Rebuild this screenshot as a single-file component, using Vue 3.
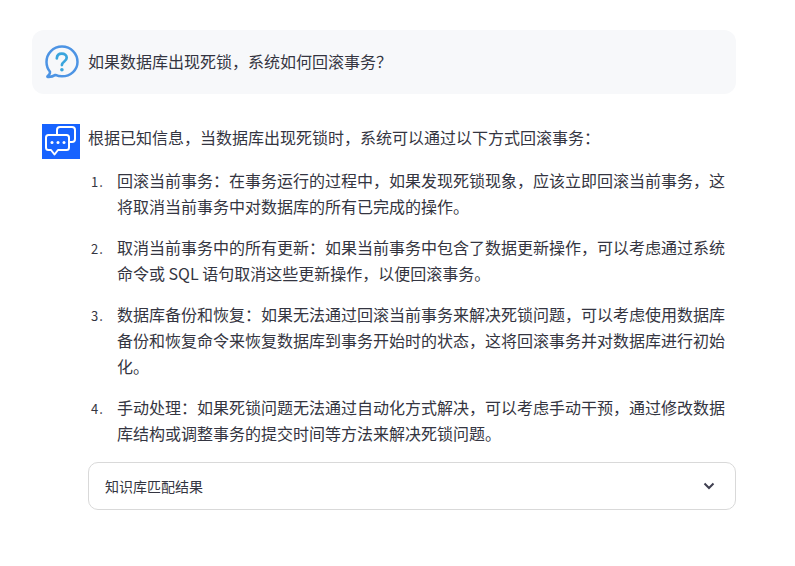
<script setup>
const items = [
  '回滚当前事务：在事务运行的过程中，如果发现死锁现象，应该立即回滚当前事务，这将取消当前事务中对数据库的所有已完成的操作。',
  '取消当前事务中的所有更新：如果当前事务中包含了数据更新操作，可以考虑通过系统命令或 SQL 语句取消这些更新操作，以便回滚事务。',
  '数据库备份和恢复：如果无法通过回滚当前事务来解决死锁问题，可以考虑使用数据库备份和恢复命令来恢复数据库到事务开始时的状态，这将回滚事务并对数据库进行初始化。',
  '手动处理：如果死锁问题无法通过自动化方式解决，可以考虑手动干预，通过修改数据库结构或调整事务的提交时间等方法来解决死锁问题。'
]
</script>

<template>
  <div class="page">
    <div class="question">
      <svg class="q-icon" width="38" height="38" viewBox="0 0 38 38" fill="none">
        <path d="M20 3.500C11.200 3.500 4.500 10.400 4.500 19c0 3.700 1.300 7.100 3.500 9.800.1 1.800-.8 3.300-2.400 4.200-.5.3-.3.9.3.9 2.800.2 5.400-.6 7.500-2 2 .9 4.300 1.400 6.600 1.400 8.800 0 15.500-6.600 15.500-14.300C35.500 10.400 28.800 3.500 20 3.500z" stroke="#4d94e4" stroke-width="2.500" stroke-linejoin="round"/>
        <path d="M14.800 15.300c.2-2.900 2.200-4.600 5-4.600 2.800 0 4.900 1.700 4.900 4.100 0 3.600-4.800 3.700-4.800 7.300" stroke="#3aa5dd" stroke-width="2.700" stroke-linecap="round"/>
        <circle cx="19.900" cy="26.800" r="1.800" fill="#3aa5dd"/>
      </svg>
      <div class="q-text">如果数据库出现死锁，系统如何回滚事务？</div>
    </div>
    <div class="answer">
      <svg class="a-icon" width="38" height="35" viewBox="0 0 38 35" fill="none">
        <rect width="38" height="35" fill="#1763ff"/>
        <path d="M15 10V6c0-1.700 1.300-3 3-3h12c1.700 0 3 1.300 3 3v9c0 1.700-1.300 3-3 3h-2" stroke="#fff" stroke-width="2"/>
        <path d="M6.500 11h18c1.400 0 2.500 1.100 2.500 2.500v10c0 1.400-1.100 2.500-2.500 2.500H16l-3.500 4.500L9 26H6.500C5.100 26 4 24.900 4 23.500v-10C4 12.100 5.100 11 6.500 11z" fill="#1763ff" stroke="#fff" stroke-width="2" stroke-linejoin="round"/>
        <circle cx="10" cy="18.500" r="1.500" fill="#fff"/>
        <circle cx="16" cy="18.500" r="1.500" fill="#fff"/>
        <circle cx="22" cy="18.500" r="1.500" fill="#fff"/>
      </svg>
      <div class="a-body">
        <p class="intro">根据已知信息，当数据库出现死锁时，系统可以通过以下方式回滚事务：</p>
        <ol class="list">
          <li v-for="(item, i) in items" :key="item">
            <span class="num">{{ i + 1 }}.</span>
            <span class="txt">{{ item }}</span>
          </li>
        </ol>
        <div class="kb">
          <span>知识库匹配结果</span>
          <svg width="12" height="8" viewBox="0 0 12 8" fill="none">
            <path d="M1.500 1.500 6 6l4.500-4.500" stroke="#3f3f50" stroke-width="2"/>
          </svg>
        </div>
      </div>
    </div>
  </div>
</template>

<style>
html, body { margin: 0; background: #fff; }
</style>

<style scoped>
.page {
  width: 795px;
  height: 566px;
  box-sizing: border-box;
  padding: 30px 59px 0 32px;
  font-family: "Noto Sans CJK SC", sans-serif;
  font-size: 16px;
  color: #343541;
  overflow: hidden;
}
.question {
  height: 64px;
  background: #f7f8fa;
  border-radius: 12px;
  padding-left: 10px;
  display: flex;
  align-items: center;
  gap: 8px;
}
.q-icon { flex: none; }
.q-text { line-height: 24px; margin-top: -2px; }
.answer {
  margin-top: 30px;
  padding-left: 10px;
  display: flex;
  gap: 8px;
}
.a-icon { flex: none; }
.a-body { flex: 1; min-width: 0; }
.intro {
  margin: -1px 0 0;
  line-height: 28px;
}
.list {
  margin: 16px 0 0;
  padding: 0 10px 0 3px;
  list-style: none;
}
.list li {
  display: flex;
  align-items: baseline;
  line-height: 26px;
  margin-bottom: 15px;
}
.num {
  flex: none;
  width: 26px;
  font-size: 13px;
  letter-spacing: 1px;
}
.txt { flex: 1; min-width: 0; }
.kb {
  margin-top: 16px;
  height: 46px;
  border: 1px solid #d9d9d9;
  border-radius: 10px;
  padding: 0 20px 0 16px;
  display: flex;
  align-items: center;
  justify-content: space-between;
  font-size: 14px;
}
</style>
